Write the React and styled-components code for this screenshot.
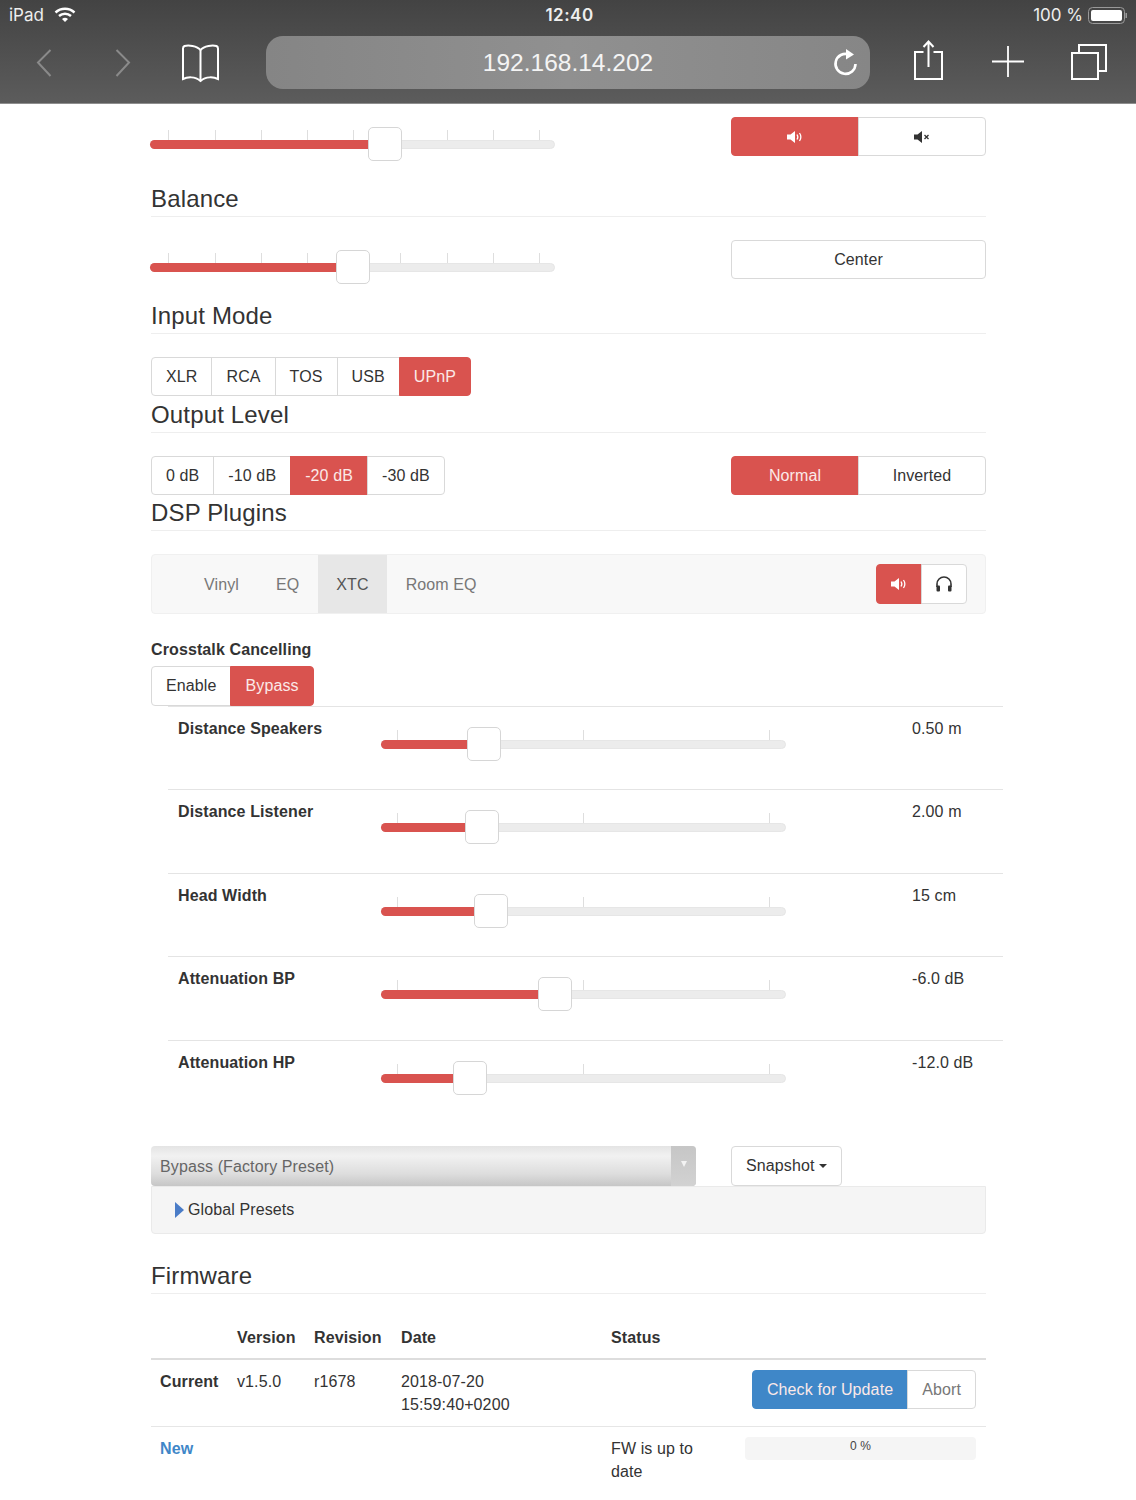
import React from "react";
import styled, { createGlobalStyle } from "styled-components";

const Global = createGlobalStyle`
  html, body { margin: 0; padding: 0; background: #fff; }
  body { font-family: "Liberation Sans", Arial, sans-serif; font-size: 16px; color: #333; }
  * { box-sizing: border-box; }
`;

const RED = "#d9534f";
const BLUE = "#3f87c8";

const Page = styled.div`
  width: 1136px;
  height: 1500px;
  overflow: hidden;
  background: #fff;
`;

const Chrome = styled.header`
  height: 104px;
  background: linear-gradient(#434343, #5c5c5c);
  border-bottom: 1px solid #8e8e8e;
  color: #fff;
`;

const StatusBar = styled.div`
  height: 30px;
  padding: 0 9px;
  display: grid;
  grid-template-columns: 1fr auto 1fr;
  align-items: center;
  font-family: Inter, "Liberation Sans", sans-serif;
  font-size: 17px;
  color: #eee;
`;

const StatusLeft = styled.div`
  display: flex;
  align-items: center;
  gap: 10px;
`;

const StatusTime = styled.div`
  font-weight: 600;
  letter-spacing: 0.5px;
  font-size: 17px;
  margin-left: 3px;
`;

const StatusRight = styled.div`
  display: flex;
  align-items: center;
  justify-content: flex-end;
  gap: 5px;
`;

const Toolbar = styled.div`
  margin-top: 6px;
  height: 53px;
  display: flex;
  align-items: flex-start;
`;

const ToolIcon = styled.svg`
  display: block;
  flex: none;
  margin-left: ${(p) => p.$gap}px;
  fill: none;
  stroke: ${(p) => p.$stroke || "#fff"};
  stroke-width: 2;
`;

const AddressBar = styled.div`
  margin-left: 47px;
  width: 604px;
  height: 53px;
  border-radius: 17px;
  background: linear-gradient(90deg, #858585, #909090 50%, #868686);
  display: flex;
  align-items: center;
  justify-content: center;
  position: relative;
  font-size: 24.500px;
  color: #f4f4f4;
`;

const Reload = styled.svg`
  position: absolute;
  right: 13px;
  top: 12px;
  fill: none;
  stroke: #fff;
  stroke-width: 2.6;
`;

const Content = styled.main`
  margin-left: 151px;
  width: 835px;
  padding-top: 13px;
  letter-spacing: 0.11px;
`;

const Row = styled.div`
  display: flex;
  justify-content: space-between;
  align-items: flex-start;
  height: ${(p) => p.$height}px;
`;

const Heading = styled.h2`
  margin: ${(p) => p.$top}px 0 ${(p) => p.$bottom ?? 23}px;
  height: 31px;
  padding: 0;
  border-bottom: 1px solid #eeeeee;
  font-size: 24px;
  font-weight: 400;
  line-height: 26px;
  letter-spacing: 0.15px;
  color: #333;
`;

const SliderBox = styled.div`
  position: relative;
  flex: none;
  width: 405px;
  height: 34px;
  margin: ${(p) => p.$top}px 0 0 ${(p) => p.$left}px;
`;

const Track = styled.div`
  position: absolute;
  left: 0;
  right: 0;
  top: 13px;
  height: 9px;
  border-radius: 5px;
  background: #ececec;
  border: 1px solid #e6e6e6;
`;

const Fill = styled.div`
  position: absolute;
  left: 0;
  top: 13px;
  height: 9px;
  border-radius: 5px 0 0 5px;
  background: ${RED};
`;

const Tick = styled.div`
  position: absolute;
  top: 3px;
  width: 1px;
  height: 10px;
  background: #dedede;
`;

const Handle = styled.div`
  position: absolute;
  top: 0;
  width: 34px;
  height: 34px;
  background: #fff;
  border: 1px solid #d6d6d6;
  border-radius: 5px;
`;

const Slider = ({ at, ticks, top = 0, left = 0 }) => (
  <SliderBox $top={top} $left={left}>
    {ticks.map((t) => (
      <Tick key={t} style={{ left: t }} />
    ))}
    <Track />
    <Fill style={{ width: at + 2 }} />
    <Handle style={{ left: at }} />
  </SliderBox>
);

const Group = styled.div`
  display: inline-flex;
  flex: none;
  height: ${(p) => p.$height || 39}px;
  width: ${(p) => (p.$width ? `${p.$width}px` : "auto")};
  vertical-align: top;
`;

const Btn = styled.div`
  flex: ${(p) => (p.$grow ? 1 : "none")};
  display: flex;
  align-items: center;
  justify-content: center;
  padding: 0 ${(p) => (p.$grow ? 0 : p.$tight ? 13 : 14)}px;
  margin-left: -1px;
  background: ${(p) => (p.$on ? RED : p.$primary ? BLUE : "#fff")};
  border: 1px solid ${(p) => (p.$on ? RED : p.$primary ? BLUE : "#d9d9d9")};
  color: ${(p) => (p.$on || p.$primary ? "#fbe9e8" : p.$muted ? "#777" : "#333")};
  font-size: 16px;
  white-space: nowrap;
  &:first-child { margin-left: 0; border-radius: 4px 0 0 4px; }
  &:last-child { border-radius: 0 4px 4px 0; }
  &:only-child { border-radius: 4px; }
`;

const Speaker = ({ color, muted }) => (
  <svg width="18" height="14" viewBox="0 0 18 14">
    <path d="M1 4.500h3.500L9 1v12L4.500 9.500H1z" fill={color} />
    {muted ? (
      <path d="M11.500 5l4 4M15.500 5l-4 4" stroke={color} strokeWidth="1.300" fill="none" />
    ) : (
      <path
        d="M11 4.500c1 1.500 1 3.500 0 5M13.500 3c1.700 2.500 1.700 5.500 0 8"
        stroke={color}
        strokeWidth="1.300"
        fill="none"
      />
    )}
  </svg>
);

const Headphones = () => (
  <svg width="18" height="17" viewBox="0 1 18 17">
    <path d="M2 12V9a7 7 0 0 1 14 0v3" fill="none" stroke="#333" strokeWidth="1.600" />
    <rect x="1.500" y="10.500" width="3.500" height="6" rx="1" fill="#333" />
    <rect x="13" y="10.500" width="3.500" height="6" rx="1" fill="#333" />
  </svg>
);

const PluginNav = styled.nav`
  height: 60px;
  padding: 0 18px 0 34px;
  display: flex;
  align-items: stretch;
  gap: 1px;
  background: #f8f8f8;
  border: 1px solid #f0f0f0;
  border-radius: 4px;
`;

const PluginTab = styled.div`
  display: flex;
  align-items: center;
  padding: 1px 18px 0;
  color: ${(p) => (p.$active ? "#555" : "#777")};
  background: ${(p) => (p.$active ? "#e7e7e7" : "transparent")};
`;

const PluginActions = styled.div`
  margin-left: auto;
  align-self: center;
`;

const SmallTitle = styled.div`
  margin-top: 25px;
  height: 22px;
  line-height: 22px;
  font-weight: 700;
`;

const GroupLine = styled.div`
  margin-top: 5px;
  height: 40px;
`;

const ParamList = styled.div`
  margin: -0.1px -17px 0 17px;
`;

const ParamRow = styled.div`
  height: 83.500px;
  border-top: 1px solid #e4e4e4;
  padding-left: 10px;
  display: flex;
`;

const ParamLabel = styled.div`
  width: 203px;
  padding-top: 11px;
  line-height: 22px;
  font-weight: 700;
`;

const ParamValue = styled.div`
  margin-left: 126px;
  padding-top: 11px;
  line-height: 22px;
`;

const PresetRow = styled.div`
  margin-top: 22.100px;
  display: flex;
  justify-content: space-between;
  height: 40px;
`;

const Select = styled.div`
  width: 545px;
  height: 40px;
  display: flex;
  align-items: center;
  justify-content: space-between;
  padding-left: 9px;
  background: linear-gradient(#e4e4e4, #f1f1f1 25%, #dddddd 70%, #c6c6c6);
  border-radius: 4px;
  color: #666;
`;

const SelectText = styled.span`
  padding-top: 2px;
`;

const SelectArrow = styled.div`
  width: 25px;
  height: 100%;
  display: flex;
  justify-content: center;
  padding-top: 15px;
  background: linear-gradient(#c6c6c6, #d2d2d2);
  border-radius: 0 4px 4px 0;
  &::after {
    content: "";
    width: 0;
    height: 0;
    border-left: 3px solid transparent;
    border-right: 3px solid transparent;
    border-top: 6px solid #f3f3f3;
  }
`;

const SnapshotBtn = styled.div`
  width: 255px;
  display: flex;
`;

const Caret = styled.span`
  display: inline-block;
  width: 0;
  height: 0;
  margin-left: 4px;
  border-left: 4px solid transparent;
  border-right: 4px solid transparent;
  border-top: 4px solid #333;
`;

const Well = styled.div`
  height: 48px;
  padding: 1px 0 0 23px;
  display: flex;
  align-items: center;
  gap: 4px;
  background: #f5f5f5;
  border: 1px solid #eaeaea;
  border-radius: 0 0 4px 4px;
`;

const Disclosure = styled.span`
  width: 0;
  height: 0;
  border-top: 8px solid transparent;
  border-bottom: 8px solid transparent;
  border-left: 9px solid #4a7cc7;
`;

const TableRow = styled.div`
  display: grid;
  grid-template-columns: 77px 77px 87px 210px 134px 250px;
  line-height: 23px;
  padding: ${(p) => (p.$head ? "9px 0 9px" : "10px 0 9px")};
  border-bottom: ${(p) => p.$line || 0}px solid ${(p) => (p.$line === 2 ? "#dddddd" : "#e6e6e6")};
  min-height: ${(p) => p.$min || 0}px;
`;

const Cell = styled.div`
  padding: 0 9px;
  font-weight: ${(p) => (p.$bold ? 700 : 400)};
  color: ${(p) => p.$color || "#333"};
`;

const ActionCell = styled.div`
  display: flex;
  justify-content: flex-end;
  padding-right: 10px;
`;

const ProgressCell = styled.div`
  padding: 0 10px 0 9px;
`;

const Progress = styled.div`
  height: 23px;
  padding-top: 2px;
  background: #f5f5f5;
  border-radius: 4px;
  text-align: center;
  font-size: 12px;
  line-height: 15px;
  color: #444;
`;

const nine = [18, 65, 111, 157, 203, 250, 297, 343, 389];
const three = [16, 202, 388];

const params = [
  ["Distance Speakers", 86, "0.50 m"],
  ["Distance Listener", 84, "2.00 m"],
  ["Head Width", 93, "15 cm"],
  ["Attenuation BP", 157, "-6.0 dB"],
  ["Attenuation HP", 72, "-12.0 dB"],
];

export default function App() {
  return (
    <Page>
      <Global />
      <Chrome>
        <StatusBar>
          <StatusLeft>
            iPad
            <svg width="22" height="16" viewBox="0 0 22 16" fill="none" stroke="#fff" strokeWidth="2.400">
              <path d="M1.500 5.500a14 14 0 0 1 19 0" />
              <path d="M5 9a9 9 0 0 1 12 0" />
              <path d="M11 15l-3-3a4.500 4.500 0 0 1 6 0z" fill="#fff" stroke="none" />
            </svg>
          </StatusLeft>
          <StatusTime>12:40</StatusTime>
          <StatusRight>
            100 %
            <svg width="39" height="17" viewBox="0 0 39 17">
              <rect x="0.500" y="0.500" width="36" height="16" rx="4" fill="none" stroke="#999" />
              <rect x="3" y="3" width="31" height="11" rx="2" fill="#fff" />
              <rect x="37.500" y="6" width="1.500" height="5" fill="#999" />
            </svg>
          </StatusRight>
        </StatusBar>
        <Toolbar>
          <ToolIcon $gap={36} $stroke="#8a8a8a" width="16" height="53" viewBox="0 0 16 53">
            <path d="M14.500 14L2 26.500 14.500 40" />
          </ToolIcon>
          <ToolIcon $gap={63} $stroke="#8a8a8a" width="16" height="53" viewBox="0 0 16 53">
            <path d="M1.500 14L14 26.500 1.500 40" />
          </ToolIcon>
          <ToolIcon $gap={51} width="37" height="53" viewBox="0 0 37 53">
            <path d="M18.500 14C15 9.500 6 9 2.500 10 1.500 10.500 1 11 1 12.500V43c4-2 12-3 17.500 2 5.500-5 13.500-4 17.500-2V12.500c0-1.500-.5-2-1.500-2.500-3.500-1-12.500-.5-16 4z" />
            <path d="M18.500 14v31" />
          </ToolIcon>
          <AddressBar>
            192.168.14.202
            <Reload width="24" height="28" viewBox="0 0 24 28">
              <path d="M16 6.500a10 10 0 1 0 6.500 9.500" />
              <path d="M13 1l8 5.500-8 5z" fill="#fff" stroke="none" />
            </Reload>
          </AddressBar>
          <ToolIcon $gap={44} width="29" height="53" viewBox="0 0 29 53">
            <path d="M9.500 16H1v27h27V16h-8.500" />
            <path d="M14.500 31V6M9.500 11l5-5.500 5 5.500" />
          </ToolIcon>
          <ToolIcon $gap={49} width="32" height="53" viewBox="0 0 32 53">
            <path d="M0 25.500h32M16 10v31" strokeWidth="1.800" />
          </ToolIcon>
          <ToolIcon $gap={47} width="37" height="53" viewBox="0 0 37 53">
            <rect x="1" y="17" width="26" height="26" />
            <path d="M8 17V9h27v26h-8" />
          </ToolIcon>
        </Toolbar>
      </Chrome>

      <Content>
        <Row $height={44}>
          <Slider at={218} ticks={nine} top={10} left={-1} />
          <Group $width={255}>
            <Btn $grow $on><Speaker color="#fff" /></Btn>
            <Btn $grow><Speaker color="#333" muted /></Btn>
          </Group>
        </Row>

        <Heading $top={25}>Balance</Heading>
        <Row $height={44}>
          <Slider at={186} ticks={nine} top={10} left={-1} />
          <Group $width={255}>
            <Btn $grow>Center</Btn>
          </Group>
        </Row>

        <Heading $top={19}>Input Mode</Heading>
        <Group>
          <Btn>XLR</Btn>
          <Btn>RCA</Btn>
          <Btn>TOS</Btn>
          <Btn>USB</Btn>
          <Btn $on>UPnP</Btn>
        </Group>

        <Heading $top={6}>Output Level</Heading>
        <Row $height={39}>
          <Group>
            <Btn>0 dB</Btn>
            <Btn>-10 dB</Btn>
            <Btn $on>-20 dB</Btn>
            <Btn>-30 dB</Btn>
          </Group>
          <Group $width={255}>
            <Btn $grow $on>Normal</Btn>
            <Btn $grow>Inverted</Btn>
          </Group>
        </Row>

        <Heading $top={5} $bottom={23}>DSP Plugins</Heading>
        <PluginNav>
          <PluginTab>Vinyl</PluginTab>
          <PluginTab>EQ</PluginTab>
          <PluginTab $active>XTC</PluginTab>
          <PluginTab>Room EQ</PluginTab>
          <PluginActions>
            <Group $height={40}>
              <Btn $on $tight><Speaker color="#fff" /></Btn>
              <Btn $tight><Headphones /></Btn>
            </Group>
          </PluginActions>
        </PluginNav>

        <SmallTitle>Crosstalk Cancelling</SmallTitle>
        <GroupLine>
          <Group $height={40}>
            <Btn>Enable</Btn>
            <Btn $on>Bypass</Btn>
          </Group>
        </GroupLine>

        <ParamList>
          {params.map(([label, at, value]) => (
            <ParamRow key={label}>
              <ParamLabel>{label}</ParamLabel>
              <Slider at={at} ticks={three} top={20} />
              <ParamValue>{value}</ParamValue>
            </ParamRow>
          ))}
        </ParamList>

        <PresetRow>
          <Select>
            <SelectText>Bypass (Factory Preset)</SelectText>
            <SelectArrow />
          </Select>
          <SnapshotBtn>
            <Group $height={40}>
              <Btn>Snapshot<Caret /></Btn>
            </Group>
          </SnapshotBtn>
        </PresetRow>
        <Well>
          <Disclosure />
          Global Presets
        </Well>

        <Heading $top={29}>Firmware</Heading>
        <TableRow $head $line={2}>
          <Cell />
          <Cell $bold>Version</Cell>
          <Cell $bold>Revision</Cell>
          <Cell $bold>Date</Cell>
          <Cell $bold>Status</Cell>
          <Cell />
        </TableRow>
        <TableRow $line={1} $min={67}>
          <Cell $bold>Current</Cell>
          <Cell>v1.5.0</Cell>
          <Cell>r1678</Cell>
          <Cell>2018-07-20<br />15:59:40+0200</Cell>
          <Cell />
          <ActionCell>
            <Group>
              <Btn $primary>Check for Update</Btn>
              <Btn $muted>Abort</Btn>
            </Group>
          </ActionCell>
        </TableRow>
        <TableRow>
          <Cell $bold $color={BLUE}>New</Cell>
          <Cell />
          <Cell />
          <Cell />
          <Cell>FW is up to date</Cell>
          <ProgressCell>
            <Progress>0 %</Progress>
          </ProgressCell>
        </TableRow>
      </Content>
    </Page>
  );
}
